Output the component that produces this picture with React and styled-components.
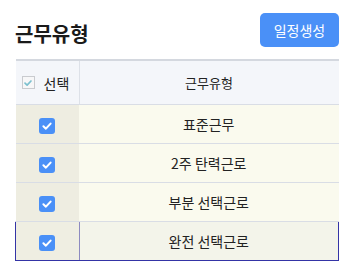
import React from "react";
import styled, { createGlobalStyle } from "styled-components";

const GlobalStyle = createGlobalStyle`
  body {
    margin: 0;
    background: #ffffff;
    font-family: "Noto Sans CJK KR", "Noto Sans", sans-serif;
    color: #222;
  }
`;

const Page = styled.div`
  padding: 13px 15px 0;
`;

const TopBar = styled.div`
  display: flex;
  align-items: center;
  justify-content: space-between;
  height: 34px;
  margin-bottom: 12px;
`;

const Title = styled.h2`
  margin: 0;
  font-size: 20px;
  font-weight: 700;
  color: #1a1a1a;
  padding-top: 6px;
`;

const Button = styled.button`
  width: 79px;
  height: 34px;
  border: none;
  border-radius: 5px;
  background: #4a90f7;
  color: #fff;
  font-family: inherit;
  font-size: 14px;
`;

const Table = styled.table`
  width: 324px;
  border-collapse: collapse;
  border-top: 2px solid #d4d8df;
  font-size: 14px;
  color: #222;
`;

const HeadCell = styled.th`
  height: 43px;
  padding: 0;
  font-size: 13px;
  font-weight: 400;
  background: #f4f6fa;
  border-bottom: 1px solid #d9dde5;
  text-align: ${(p) => (p.$first ? "left" : "center")};
  width: ${(p) => (p.$first ? "63px" : "auto")};
  border-right: ${(p) => (p.$first ? "1px solid #dde1e8" : "none")};
`;

const HeadLabel = styled.span`
  display: flex;
  align-items: center;
  gap: 9px;
  padding-left: 6px;
  font-size: 14px;
`;

const Row = styled.tr`
  height: 39px;
`;

const Cell = styled.td`
  padding: 0;
  text-align: center;
  background: ${(p) =>
    p.$first
      ? p.$active ? "#efeee2" : "#eeede1"
      : p.$active ? "#f3f4ea" : "#fafaee"};
  border-bottom: 1px solid ${(p) => (p.$active ? "#3434a6" : "#d9dde5")};
  border-top: ${(p) => (p.$active ? "1px solid #3434a6" : "none")};
  border-left: ${(p) => (p.$active && p.$first ? "1px solid #3434a6" : "none")};
  border-right: ${(p) =>
    p.$active ? (p.$first ? "1px solid #8d8ac0" : "1px solid #3434a6") : "none"};
`;

const MiniBox = styled.span`
  display: inline-flex;
  align-items: center;
  justify-content: center;
  width: 11px;
  height: 11px;
  border: 1px solid #c9cbcf;
  background: #f7f7f8;
`;

const CheckBox = styled.span`
  display: inline-flex;
  align-items: center;
  justify-content: center;
  width: 16px;
  height: 16px;
  border-radius: 3px;
  background: #4a90f7;
  vertical-align: middle;
`;

const Check = ({ color, size }) => (
  <svg width={size} height={size} viewBox="0 0 10 10">
    <path d="M2 5.2 L4.1 7.2 L8 3" fill="none" stroke={color} strokeWidth="1.7" strokeLinecap="round" strokeLinejoin="round" />
  </svg>
);

const types = ["표준근무", "2주 탄력근로", "부분 선택근로", "완전 선택근로"];

export default function App() {
  return (
    <Page>
      <GlobalStyle />
      <TopBar>
        <Title>근무유형</Title>
        <Button>일정생성</Button>
      </TopBar>
      <Table>
        <thead>
          <tr>
            <HeadCell $first>
              <HeadLabel>
                <MiniBox>
                  <Check color="#7cc0cf" size={10} />
                </MiniBox>
                선택
              </HeadLabel>
            </HeadCell>
            <HeadCell>근무유형</HeadCell>
          </tr>
        </thead>
        <tbody>
          {types.map((t, i) => {
            const active = i === types.length - 1;
            return (
              <Row key={t}>
                <Cell $first $active={active}>
                  <CheckBox>
                    <Check color="#fff" size={12} />
                  </CheckBox>
                </Cell>
                <Cell $active={active}>{t}</Cell>
              </Row>
            );
          })}
        </tbody>
      </Table>
    </Page>
  );
}
